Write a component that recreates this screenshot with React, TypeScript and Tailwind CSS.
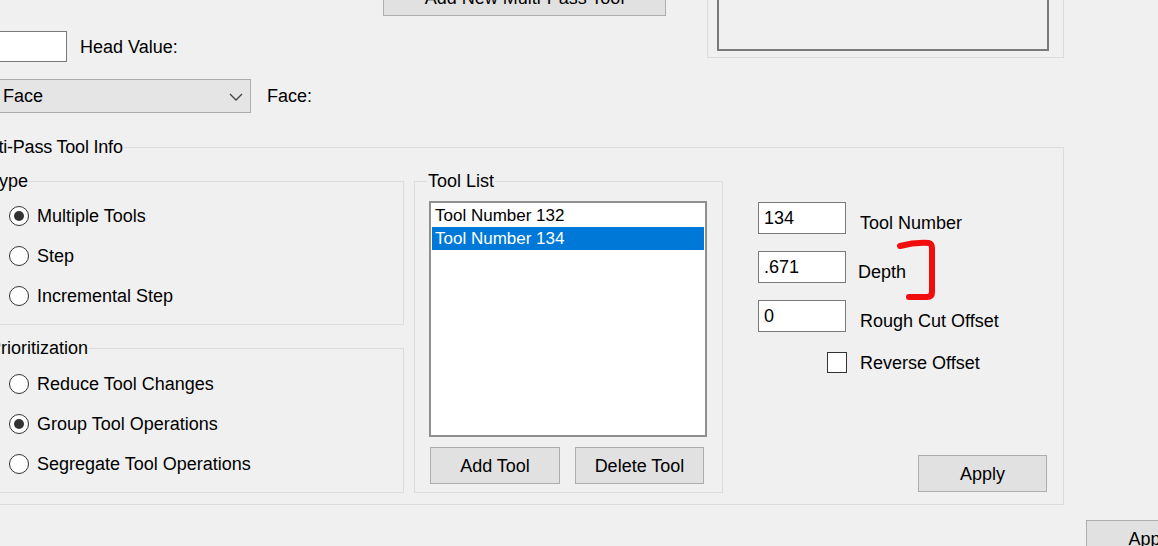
import React from "react";

const btn =
  "shrink-0 bg-[#e1e1e1] border border-[#adadad] flex items-center justify-center";
const box = "shrink-0 bg-white border border-[#7a7a7a] flex items-center";

function Radio({ label, checked }: { label: string; checked?: boolean }) {
  return (
    <div className="flex items-center h-[40px]">
      <span className="w-[20px] h-[20px] rounded-full border-[1.5px] border-[#333333] bg-white flex items-center justify-center">
        {checked && <span className="w-[10px] h-[10px] rounded-full bg-[#333333]" />}
      </span>
      <span className="ml-[8px] whitespace-nowrap">{label}</span>
    </div>
  );
}

function Field({ value, label, labelGap }: { value: string; label: string; labelGap: string }) {
  return (
    <div className="flex items-start h-[32px]">
      <div className={`${box} w-[88px] h-[32px] px-[5px] pb-[1px]`}>{value}</div>
      <span className={`mt-[11px] whitespace-nowrap ${labelGap}`}>{label}</span>
    </div>
  );
}

export default function App() {
  return (
    <div className="relative w-[1158px] h-[546px] overflow-hidden bg-[#f0f0f0] text-black text-[18px] leading-[20px] font-['Liberation_Sans',Arial,sans-serif]">
      {/* top controls */}
      <div className="flex items-start">
        <div className="w-[707px] shrink-0 flex flex-col">
          <button className={`${btn} ml-[383px] -mt-[21px] w-[283px] h-[37px]`}>
            Add New Multi-Pass Tool
          </button>
          <div className="mt-[15px] flex items-center h-[31px]">
            <div className={`${box} -ml-[40px] w-[107px] h-[31px]`} />
            <span className="ml-[13px]">Head Value:</span>
          </div>
          <div className="mt-[17px] flex items-center h-[34px]">
            <div className="-ml-[40px] w-[291px] h-[34px] bg-[#e5e5e5] border border-[#adadad] flex items-center pl-[42px] pr-[7px]">
              <span className="flex-1">Face</span>
              <svg width="14" height="8" viewBox="0 0 14 8" className="mt-[1px]">
                <polyline points="1,1 7,7 13,1" fill="none" stroke="#444" strokeWidth="1.3" />
              </svg>
            </div>
            <span className="ml-[16px]">Face:</span>
          </div>
        </div>
        <div className="-mt-[20px] w-[357px] h-[78px] border border-[#dcdcdc] flex flex-col justify-end pl-[9px] pb-[6px]">
          <div className="w-[332px] h-[60px] border-2 border-[#7a7a7a]" />
        </div>
      </div>

      {/* Multi-Pass Tool Info */}
      <fieldset className="mt-[24px] -ml-[40px] w-[1104px] h-[368px] border border-[#dcdcdc]">
        <legend className="ml-[8px] px-[1px] leading-[20px] tracking-[-0.2px]">Multi-Pass Tool Info</legend>
        <div className="flex items-start pt-[14px]">
          <div className="ml-[19px] w-[424px] shrink-0 flex flex-col">
            <fieldset className="h-[154px] border border-[#dcdcdc]">
              <legend className="ml-[7px] px-[1px] leading-[20px]">Type</legend>
              <div className="pl-[28px] pt-[5px]">
                <Radio label="Multiple Tools" checked />
                <Radio label="Step" />
                <Radio label="Incremental Step" />
              </div>
            </fieldset>
            <fieldset className="mt-[13px] h-[155px] border border-[#dcdcdc]">
              <legend className="ml-[7px] px-[1px] leading-[20px]">Prioritization</legend>
              <div className="pl-[28px] pt-[6px]">
                <Radio label="Reduce Tool Changes" />
                <Radio label="Group Tool Operations" checked />
                <Radio label="Segregate Tool Operations" />
              </div>
            </fieldset>
          </div>

          <fieldset className="ml-[10px] w-[309px] h-[322px] shrink-0 border border-[#dcdcdc]">
            <legend className="ml-[12px] px-[1px] leading-[20px]">Tool List</legend>
            <div className="ml-[14px] mt-[10px] w-[278px] h-[236px] bg-white border-2 border-[#8f8f8f] pt-[1px] px-[1px] text-[17px]">
              <div className="h-[23px] flex items-center pl-[3px]">Tool Number 132</div>
              <div className="h-[23px] flex items-center pl-[3px] bg-[#0078d7] text-white">
                Tool Number 134
              </div>
            </div>
            <div className="mt-[10px] ml-[15px] flex gap-[15px]">
              <button className={`${btn} w-[130px] h-[37px]`}>Add Tool</button>
              <button className={`${btn} w-[129px] h-[37px]`}>Delete Tool</button>
            </div>
          </fieldset>

          <div className="ml-[35px] mt-[31px] flex flex-col">
            <Field value="134" label="Tool Number" labelGap="ml-[14px]" />
            <div className="mt-[17px]">
              <Field value=".671" label="Depth" labelGap="ml-[12px]" />
            </div>
            <div className="mt-[17px]">
              <Field value="0" label="Rough Cut Offset" labelGap="ml-[14px]" />
            </div>
            <div className="mt-[20px] ml-[69px] flex items-center h-[21px]">
              <span className="w-[20px] h-[21px] bg-white border-[1.5px] border-[#333333]" />
              <span className="ml-[13px]">Reverse Offset</span>
            </div>
            <button className={`${btn} mt-[82px] ml-[160px] w-[129px] h-[37px]`}>Apply</button>
          </div>
        </div>
      </fieldset>

      <button className={`${btn} mt-[15px] ml-[1086px] w-[130px] h-[37px]`}>Apply</button>

      {/* red annotation mark */}
      <svg className="absolute left-0 top-0 pointer-events-none" width="1158" height="546">
        <path
          d="M900 246 Q915 242 929 243 Q932 244 932 248 L932 292 Q932 297 927 297 L909 297"
          fill="none"
          stroke="#f20d0d"
          strokeWidth="6"
          strokeLinecap="round"
          strokeLinejoin="round"
        />
      </svg>
    </div>
  );
}
